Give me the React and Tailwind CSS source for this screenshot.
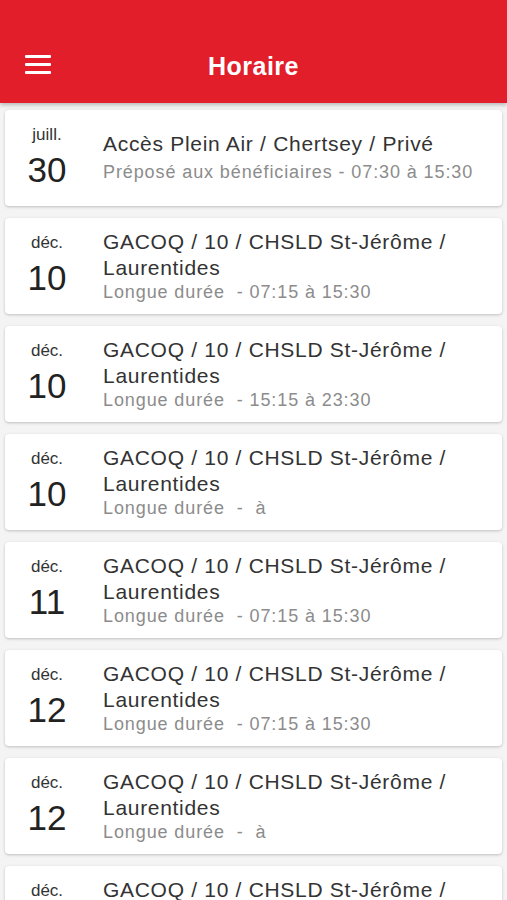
import React from "react";

const items = [
  { m: "juill.", d: "30", t: "Accès Plein Air / Chertsey / Privé", s: "Préposé aux bénéficiaires - 07:30 à 15:30", one: true },
  { m: "déc.", d: "10", t: "GACOQ / 10 / CHSLD St-Jérôme / Laurentides", s: "Longue durée  - 07:15 à 15:30" },
  { m: "déc.", d: "10", t: "GACOQ / 10 / CHSLD St-Jérôme / Laurentides", s: "Longue durée  - 15:15 à 23:30" },
  { m: "déc.", d: "10", t: "GACOQ / 10 / CHSLD St-Jérôme / Laurentides", s: "Longue durée  -  à" },
  { m: "déc.", d: "11", t: "GACOQ / 10 / CHSLD St-Jérôme / Laurentides", s: "Longue durée  - 07:15 à 15:30" },
  { m: "déc.", d: "12", t: "GACOQ / 10 / CHSLD St-Jérôme / Laurentides", s: "Longue durée  - 07:15 à 15:30" },
  { m: "déc.", d: "12", t: "GACOQ / 10 / CHSLD St-Jérôme / Laurentides", s: "Longue durée  -  à" },
  { m: "déc.", d: "12", t: "GACOQ / 10 / CHSLD St-Jérôme / Laurentides", s: "Longue durée  - 07:15 à 15:30" },
];

export default function App() {
  return (
    <div className="w-[507px] h-[900px] overflow-hidden bg-[#f4f4f4] font-['Liberation_Sans',Arial,sans-serif]">
      <header className="relative h-[103px] bg-[#e21e2b] shadow-[0_2px_4px_rgba(0,0,0,0.25)] flex items-end pb-[23px]">
        <div className="ml-[25px] w-[26px] flex flex-col gap-[5px] pb-[6px]">
          <div className="h-[3px] bg-white rounded-[1px]" />
          <div className="h-[3px] bg-white rounded-[1px]" />
          <div className="h-[3px] bg-white rounded-[1px]" />
        </div>
        <h1 className="absolute left-0 right-0 bottom-[22px] text-center text-white text-[25px] font-bold tracking-[0.5px] leading-[30px]">Horaire</h1>
      </header>
      <div className="flex flex-col gap-[12px] px-[5px] pt-[7px]">
        {items.map((it, i) => (
          <div key={i} className="h-[96px] shrink-0 bg-white rounded-[4px] shadow-[0_1px_3px_rgba(0,0,0,0.22)] flex items-start">
            <div className="w-[84px] shrink-0 flex flex-col items-center pt-[14px]">
              <div className="text-[17px] leading-[22px] text-[#333]">{it.m}</div>
              <div className="text-[35px] leading-[40px] mt-[4px] text-[#222]">{it.d}</div>
            </div>
            <div className={`ml-[14px] pr-[8px] ${it.one ? "pt-[21px]" : "pt-[11px]"}`}>
              <div className="text-[21px] leading-[26px] tracking-[0.7px] text-[#333]">{it.t}</div>
              <div className={`text-[18px] leading-[23px] tracking-[0.9px] text-[#8c8c8c] whitespace-pre ${it.one ? "mt-[4px]" : ""}`}>{it.s}</div>
            </div>
          </div>
        ))}
      </div>
    </div>
  );
}
